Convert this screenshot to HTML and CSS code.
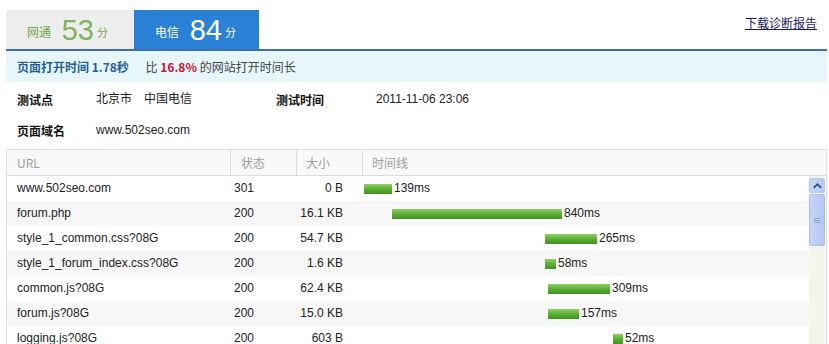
FILE: index.html
```html
<!DOCTYPE html>
<html lang="zh-CN">
<head>
    <meta charset="UTF-8">
    <title>测速报告</title>
    <link rel="stylesheet" href="styles.css">
</head>
<body>
    <div class="page">
        <!-- 运营商标签 -->
        <div class="tabs">
            <div class="tab tab-off">网通 <span class="score">53</span><span class="unit">分</span></div>
            <div class="tab tab-on">电信 <span class="score">84</span><span class="unit">分</span></div>
            <a class="download" href="#">下载诊断报告</a>
        </div>

        <div class="summary">
            <b class="sum-title">页面打开时间 1.78秒</b>
            <span class="sum-text">比 <b class="pct">16.8%</b> 的网站打开时间长</span>
        </div>

        <div class="info">
            <div class="info-row">
                <span class="label">测试点</span>
                <span class="val">北京市</span>
                <span class="val val-isp">中国电信</span>
                <span class="label label-time">测试时间</span>
                <span class="val">2011-11-06 23:06</span>
            </div>
            <div class="info-row">
                <span class="label">页面域名</span>
                <span class="val">www.502seo.com</span>
            </div>
        </div>

        <div class="grid">
            <div class="grid-head">
                <div class="c-url">URL</div>
                <div class="c-st">状态</div>
                <div class="c-sz">大小</div>
                <div class="c-tl">时间线</div>
            </div>
            <div class="grid-body">
                <div class="rows" id="rows"></div>
                <div class="scrollbar">
                    <div class="sb-btn"><svg viewBox="0 0 10 6" width="9" height="6"><path d="M1 5 L5 1 L9 5" fill="none" stroke="#2d4a86" stroke-width="2"/></svg></div>
                    <div class="sb-thumb"><span></span><span></span><span></span></div>
                </div>
            </div>
        </div>
    </div>

    <script>
        // 资源列表: url, 状态, 大小, 开始位置(px), 宽度(px), 耗时
        const items = [
            ['www.502seo.com', '301', '0 B', 2, 28, '139ms'],
            ['forum.php', '200', '16.1 KB', 30, 170, '840ms'],
            ['style_1_common.css?08G', '200', '54.7 KB', 183, 52, '265ms'],
            ['style_1_forum_index.css?08G', '200', '1.6 KB', 183, 11, '58ms'],
            ['common.js?08G', '200', '62.4 KB', 186, 62, '309ms'],
            ['forum.js?08G', '200', '15.0 KB', 186, 31, '157ms'],
            ['logging.js?08G', '200', '603 B', 251, 10, '52ms']
        ];
        const rows = document.getElementById('rows');
        items.forEach(it => {
            const row = document.createElement('div');
            row.className = 'row';
            row.innerHTML =
                '<div class="c-url">' + it[0] + '</div>' +
                '<div class="c-st">' + it[1] + '</div>' +
                '<div class="c-sz">' + it[2] + '</div>' +
                '<div class="c-tl"><i class="bar" style="margin-left:' + it[3] + 'px;width:' + it[4] + 'px"></i>' + it[5] + '</div>';
            rows.appendChild(row);
        });
    </script>
</body>
</html>
```

FILE: styles.css
```css
body {
    margin: 0;
    background: #fff;
    font-family: "Liberation Sans", Arial, "Noto Sans CJK SC", sans-serif;
    font-size: 12px;
    color: #222;
    overflow: hidden;
}

.page {
    padding: 10px 2px 0 6px;
}

.tabs {
    display: flex;
    align-items: stretch;
    height: 39px;
    border-bottom: 2px solid #3f6fa6;
}

.tab {
    width: 128px;
    box-sizing: border-box;
    padding: 5px 0 0 21px;
    font-size: 12px;
    line-height: 30px;
    font-family: "Noto Sans CJK SC", sans-serif;
}

.tab-off {
    background: #ededed;
    color: #6fa74e;
}

.tab-on {
    width: 125px;
    background: #2a80d5;
    color: #fff;
}

.score {
    font-family: "Liberation Sans", Arial, sans-serif;
    font-size: 29px;
    margin: 0 3px 0 8px;
    vertical-align: -3px;
}

.tab-off .score {
    color: #7fb25e;
}

.unit {
    font-size: 11px;
}

.download {
    margin-left: auto;
    margin-right: 10px;
    margin-top: 4px;
    color: #1b1b5e;
    font-family: "Noto Sans CJK SC", sans-serif;
    font-size: 12px;
}

.summary {
    background: #e7f6fb;
    height: 31px;
    line-height: 31px;
    padding-left: 11px;
    font-family: "Noto Sans CJK SC", sans-serif;
}

.sum-title {
    color: #235f91;
    margin-right: 14px;
}

.sum-text {
    color: #444;
}

.pct {
    color: #c8152f;
}

.info {
    padding: 2px 0 3px 11px;
}

.info-row {
    display: flex;
    height: 31px;
    line-height: 31px;
}

.label {
    width: 79px;
    font-weight: bold;
    font-family: "Noto Sans CJK SC", sans-serif;
    color: #111;
}

.val {
    font-family: "Liberation Sans", Arial, "Noto Sans CJK SC", sans-serif;
    color: #222;
    margin-right: 12px;
}

.val-isp {
    margin-right: 0;
    width: 132px;
}

.label-time {
    width: 100px;
}

.grid {
    border: 1px solid #dedede;
    border-bottom: none;
}

.grid-head,
.row {
    display: flex;
    height: 25px;
    line-height: 25px;
}

.grid-head {
    background: #f9f9f9;
    color: #9d9d9d;
    border-bottom: 1px solid #dcdcdc;
    font-family: "Noto Sans CJK SC", sans-serif;
}

.grid-head > div + div {
    border-left: 1px solid #dcdcdc;
}

.c-url {
    width: 213px;
    padding-left: 10px;
}

.c-st {
    width: 60px;
    padding-left: 4px;
}

.grid-head .c-st {
    padding-left: 10px;
    width: 55px;
}

.c-sz {
    width: 49px;
    padding-right: 16px;
    text-align: right;
}

.grid-head .c-sz {
    text-align: left;
    padding: 0 0 0 9px;
    width: 56px;
}

.c-tl {
    flex: 1;
    padding-left: 9px;
}

.grid-body {
    display: flex;
}

.rows {
    flex: 1;
}

.row:nth-child(even) {
    background: #f7f7f7;
}

.row .c-tl {
    padding-left: 3px;
    display: flex;
    align-items: center;
}

.bar {
    display: block;
    height: 10px;
    margin-right: 2px;
    background: linear-gradient(#8fd167, #5aae33 50%, #3f9220);
}

.scrollbar {
    width: 16px;
    margin-right: 1px;
    background: #f4f4ee;
    padding-top: 2px;
}

.sb-btn {
    height: 13px;
    margin: 0 0 1px;
    border: 1px solid #b9c9ec;
    border-radius: 2px;
    background: linear-gradient(90deg, #c9d6f5, #b7c9f2);
    display: flex;
    align-items: center;
    justify-content: center;
}

.sb-thumb {
    height: 50px;
    border: 1px solid #a9bee9;
    border-radius: 2px;
    background: linear-gradient(90deg, #c6d4f7, #b4c6f3);
    display: flex;
    flex-direction: column;
    align-items: center;
    justify-content: center;
    gap: 1px;
}

.sb-thumb span {
    width: 6px;
    height: 1px;
    background: #8ea6dc;
}
```
